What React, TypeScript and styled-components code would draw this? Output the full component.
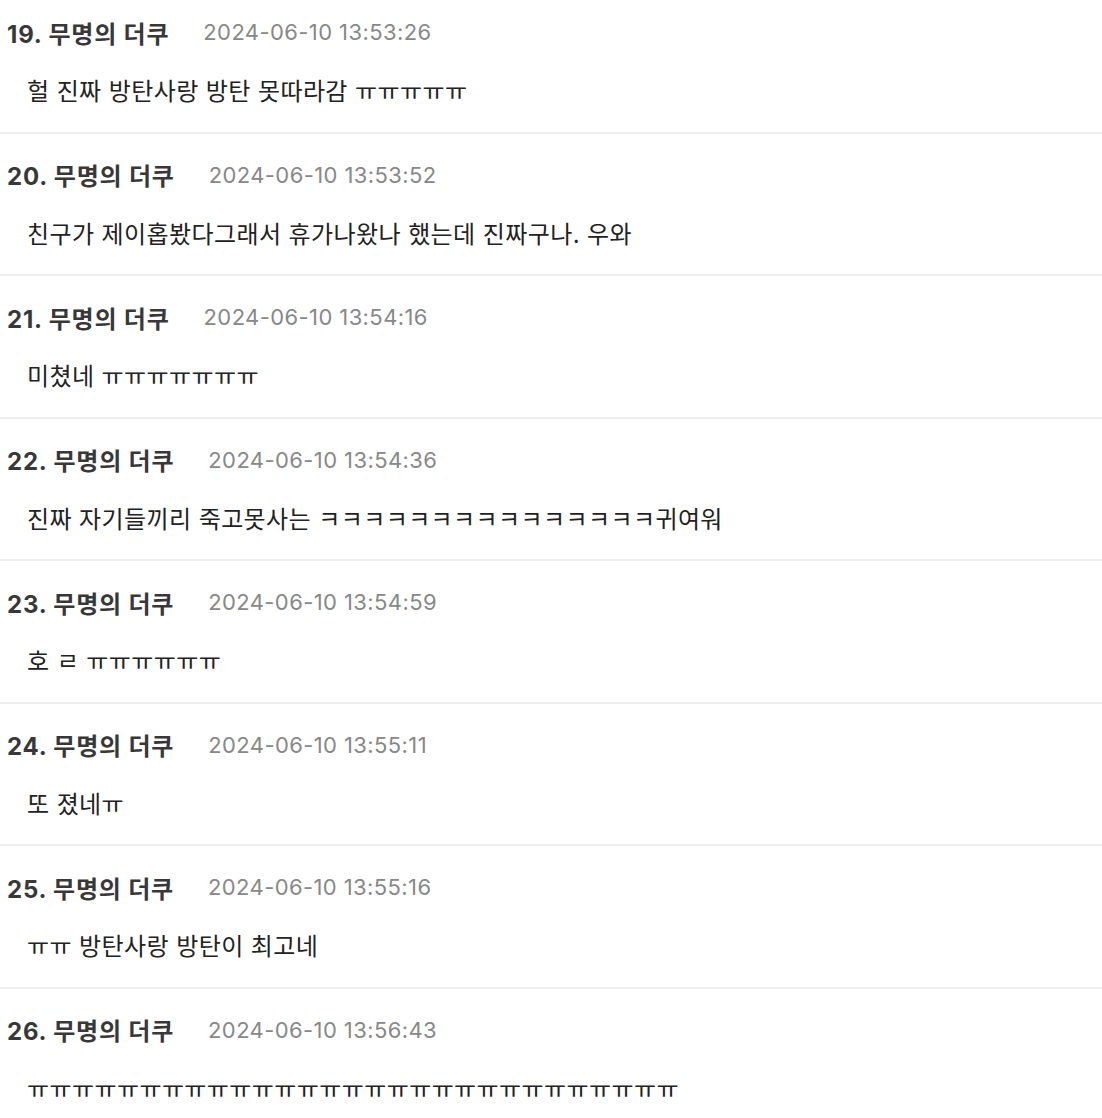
import React from 'react';
import styled, { createGlobalStyle } from 'styled-components';

const GlobalStyle = createGlobalStyle`
  html, body {
    margin: 0;
    padding: 0;
    background: #fff;
  }
  body {
    font-family: "Inter", "Noto Sans CJK KR", sans-serif;
    color: #333;
    overflow: hidden;
  }
`;

const CommentList = styled.ul`
  list-style: none;
  margin: -9px 0 0;
  padding: 0;
`;

const CommentItem = styled.li`
  padding: 22px 0 20.5px;
  border-bottom: 2px solid #eeeeee;
`;

const CommentHeader = styled.div`
  display: flex;
  align-items: center;
  height: 38px;
  padding-left: 7px;
`;

const Author = styled.span`
  font-size: 24px;
  font-weight: 700;
  letter-spacing: 0.8px;
  color: #383838;
`;

const DateText = styled.span`
  margin-left: 34px;
  font-size: 22px;
  letter-spacing: 0.4px;
  color: #888;
`;

const Body = styled.p`
  margin: 22px 0 0;
  padding-left: 27px;
  height: 38px;
  line-height: 38px;
  font-size: 24px;
  letter-spacing: 0.4px;
  color: #222;
  white-space: nowrap;
`;

type Comment = { no: number; date: string; text: string };

const comments: Comment[] = [
  { no: 19, date: '2024-06-10 13:53:26', text: '헐 진짜 방탄사랑 방탄 못따라감 ㅠㅠㅠㅠㅠ' },
  { no: 20, date: '2024-06-10 13:53:52', text: '친구가 제이홉봤다그래서 휴가나왔나 했는데 진짜구나. 우와' },
  { no: 21, date: '2024-06-10 13:54:16', text: '미쳤네 ㅠㅠㅠㅠㅠㅠㅠ' },
  { no: 22, date: '2024-06-10 13:54:36', text: '진짜 자기들끼리 죽고못사는 ㅋㅋㅋㅋㅋㅋㅋㅋㅋㅋㅋㅋㅋㅋㅋ귀여워' },
  { no: 23, date: '2024-06-10 13:54:59', text: '호 ㄹ ㅠㅠㅠㅠㅠㅠ' },
  { no: 24, date: '2024-06-10 13:55:11', text: '또 졌네ㅠ' },
  { no: 25, date: '2024-06-10 13:55:16', text: 'ㅠㅠ 방탄사랑 방탄이 최고네' },
  { no: 26, date: '2024-06-10 13:56:43', text: 'ㅠ'.repeat(29) },
];

const App = () => {
  return (
    <>
      <GlobalStyle />
      <CommentList>
        {comments.map((c) => (
          <CommentItem key={c.no}>
            <CommentHeader>
              <Author>{c.no}. 무명의 더쿠</Author>
              <DateText>{c.date}</DateText>
            </CommentHeader>
            <Body>{c.text}</Body>
          </CommentItem>
        ))}
      </CommentList>
    </>
  );
};

export default App;
